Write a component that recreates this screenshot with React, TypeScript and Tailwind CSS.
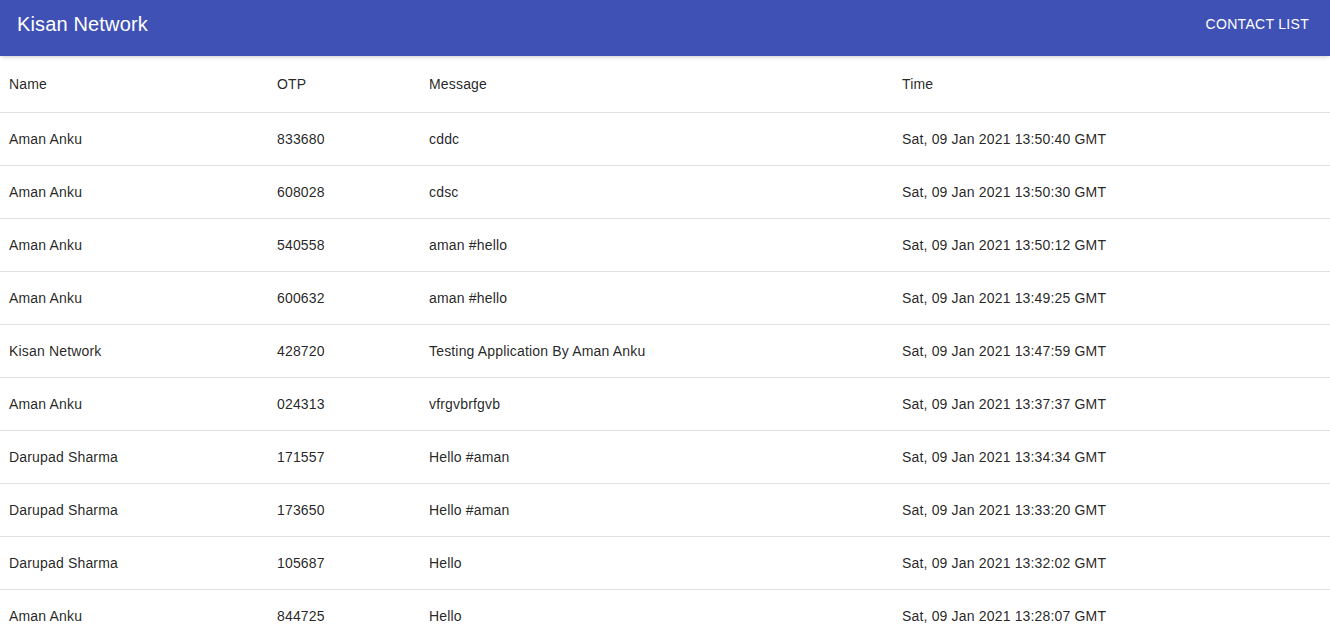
export default function App() {
  const messages = [
    { name: "Aman Anku", otp: "833680", message: "cddc", time: "Sat, 09 Jan 2021 13:50:40 GMT" },
    { name: "Aman Anku", otp: "608028", message: "cdsc", time: "Sat, 09 Jan 2021 13:50:30 GMT" },
    { name: "Aman Anku", otp: "540558", message: "aman #hello", time: "Sat, 09 Jan 2021 13:50:12 GMT" },
    { name: "Aman Anku", otp: "600632", message: "aman #hello", time: "Sat, 09 Jan 2021 13:49:25 GMT" },
    { name: "Kisan Network", otp: "428720", message: "Testing Application By Aman Anku", time: "Sat, 09 Jan 2021 13:47:59 GMT" },
    { name: "Aman Anku", otp: "024313", message: "vfrgvbrfgvb", time: "Sat, 09 Jan 2021 13:37:37 GMT" },
    { name: "Darupad Sharma", otp: "171557", message: "Hello #aman", time: "Sat, 09 Jan 2021 13:34:34 GMT" },
    { name: "Darupad Sharma", otp: "173650", message: "Hello #aman", time: "Sat, 09 Jan 2021 13:33:20 GMT" },
    { name: "Darupad Sharma", otp: "105687", message: "Hello", time: "Sat, 09 Jan 2021 13:32:02 GMT" },
    { name: "Aman Anku", otp: "844725", message: "Hello", time: "Sat, 09 Jan 2021 13:28:07 GMT" },
  ]

  return (
    <div className="min-h-screen bg-white font-['Liberation_Sans',Arial,sans-serif] text-[rgba(0,0,0,0.87)]">
      {/* App bar */}
      <header className="h-14 bg-[#3f51b5] text-white shadow-[0_2px_4px_-1px_rgba(0,0,0,0.2)] relative z-10">
        <div className="flex h-12 items-center justify-between pl-[17px] pr-[21px]">
          <h1 className="text-[20px] leading-none tracking-[0.15px]">Kisan Network</h1>
          <button className="text-[14px] uppercase tracking-[0.3px] leading-none">Contact List</button>
        </div>
      </header>

      {/* Messages table */}
      <table className="w-full border-collapse text-[14px] leading-none tracking-[0.17px] table-fixed">
        <colgroup>
          <col className="w-[268px]" />
          <col className="w-[152px]" />
          <col className="w-[473px]" />
          <col />
        </colgroup>
        <thead>
          <tr className="h-[56px] border-b border-[#e0e0e0]">
            <th className="pl-[9px] text-left font-normal">Name</th>
            <th className="pl-[9px] text-left font-normal">OTP</th>
            <th className="pl-[9px] text-left font-normal">Message</th>
            <th className="pl-[9px] text-left font-normal">Time</th>
          </tr>
        </thead>
        <tbody>
          {messages.map((m, i) => (
            <tr key={i} className="h-[53px] border-b border-[#e0e0e0]">
              <td className="pl-[9px]">{m.name}</td>
              <td className="pl-[9px]">{m.otp}</td>
              <td className="pl-[9px]">{m.message}</td>
              <td className="pl-[9px]">{m.time}</td>
            </tr>
          ))}
        </tbody>
      </table>
    </div>
  )
}
